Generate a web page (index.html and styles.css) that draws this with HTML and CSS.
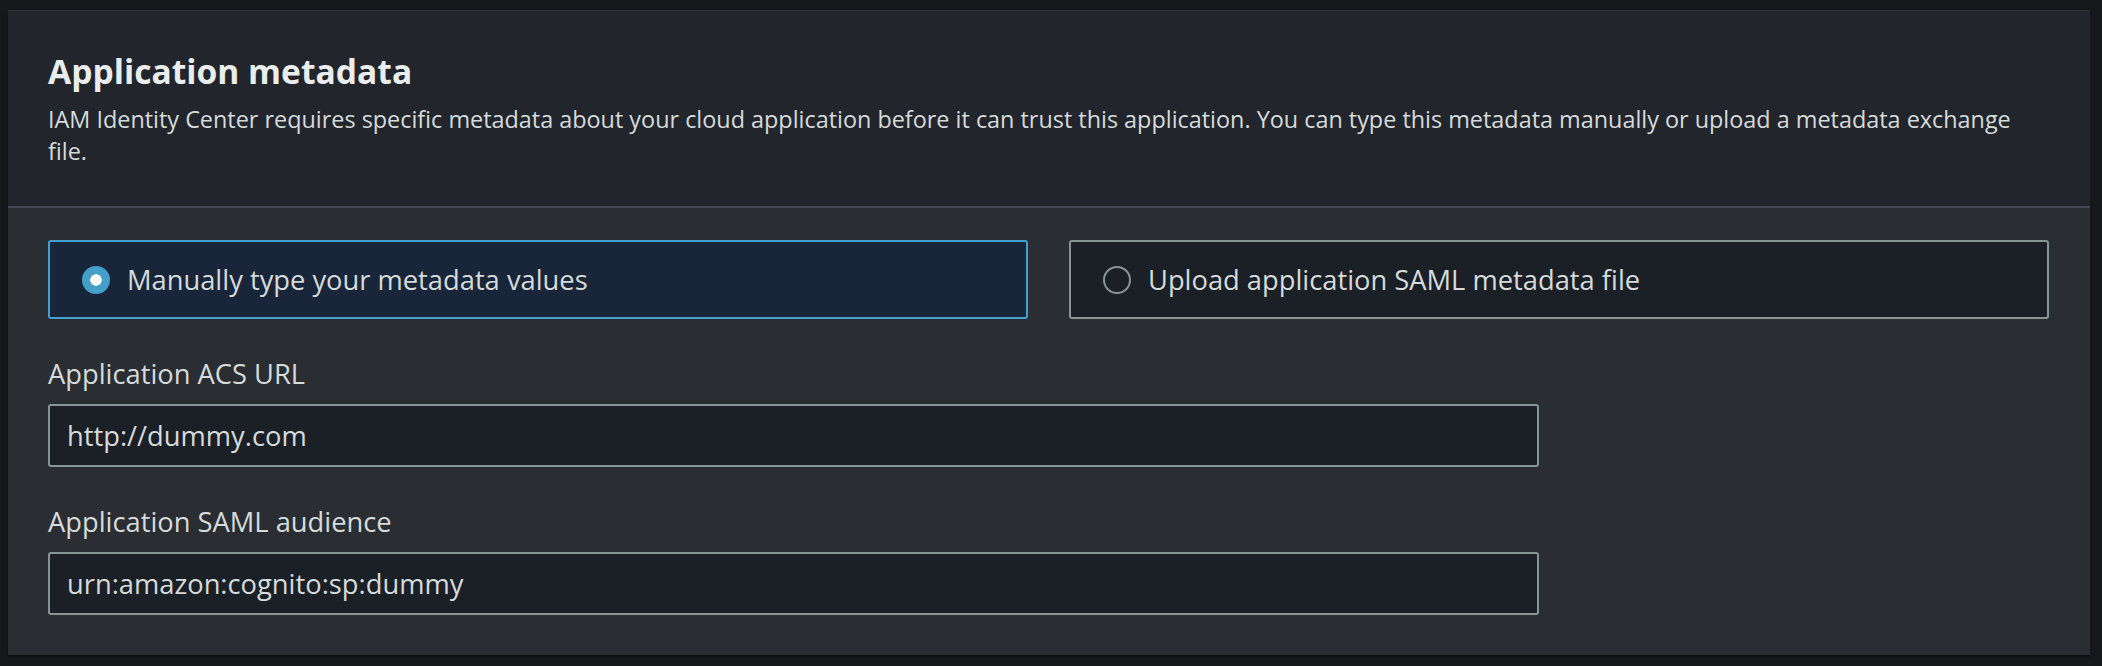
FILE: index.html
```html
<!DOCTYPE html>
<html lang="en">
<head>
<meta charset="utf-8">
<title>Application metadata</title>
<link rel="stylesheet" href="styles.css">
</head>
<body>
<section class="container">
  <header class="container-header">
    <h2 class="title">Application metadata</h2>
    <p class="description">IAM Identity Center requires specific metadata about your cloud application before it can trust this application. You can type this metadata manually or upload a metadata exchange file.</p>
  </header>
  <div class="container-body">
    <div class="tiles">
      <label class="tile tile-selected">
        <span class="radio radio-checked"></span>
        <span class="tile-label">Manually type your metadata values</span>
      </label>
      <label class="tile">
        <span class="radio"></span>
        <span class="tile-label">Upload application SAML metadata file</span>
      </label>
    </div>
    <div class="field">
      <div class="field-label">Application ACS URL</div>
      <div class="input">http://dummy.com</div>
    </div>
    <div class="field">
      <div class="field-label">Application SAML audience</div>
      <div class="input">urn:amazon:cognito:sp:dummy</div>
    </div>
  </div>
</section>
</body>
</html>
```
FILE: styles.css
```css
* { box-sizing: border-box; }
html, body { margin: 0; padding: 0; }
body {
  background: #17181c;
  padding: 10px 12px 11px 8px;
  font-family: "Open Sans", "Noto Sans", sans-serif;
  color: #d5dbdb;
}
.container {
  background: #2a2d32;
  border-top: 1px solid #2f3239;
  box-shadow: 0 1px 2px rgba(0, 0, 0, 0.5);
}
.container-header {
  background: #22252b;
  padding: 38px 40px 39px 40px;
  border-bottom: 2px solid #414750;
}
.title {
  margin: 0;
  font-size: 33.6px;
  line-height: 44px;
  font-weight: 700;
  color: #eaeded;
}
.description {
  margin: 10px 0 0 0;
  font-size: 23.4px;
  line-height: 32px;
  color: #d5dbdb;
}
.container-body {
  padding: 32px 41px 40px 40px;
}
.tiles {
  display: grid;
  grid-template-columns: 1fr 1fr;
  gap: 41px;
}
.tile {
  display: flex;
  align-items: center;
  height: 79px;
  padding: 0 32px;
  background: #1b1f26;
  border: 2px solid #879596;
  border-radius: 3px;
  font-size: 27.3px;
  color: #d5dbdb;
}
.tile-selected {
  background: #19263a;
  border-color: #44a1cf;
}
.radio {
  flex: none;
  width: 28px;
  height: 28px;
  border-radius: 50%;
  border: 2px solid #879596;
  margin-right: 17px;
}
.radio-checked {
  border: none;
  background: radial-gradient(circle, #ffffff 0 5.5px, #44a0c8 6px);
}
.field { margin-top: 33px; }
.field-label {
  font-size: 27.3px;
  line-height: 44px;
  color: #d5dbdb;
}
.input {
  margin-top: 8px;
  width: 1491px;
  height: 63px;
  display: flex;
  align-items: center;
  padding: 0 17px;
  background: #1b1f26;
  border: 2px solid #879596;
  border-radius: 3px;
  font-size: 27.3px;
  color: #d5dbdb;
}
```
